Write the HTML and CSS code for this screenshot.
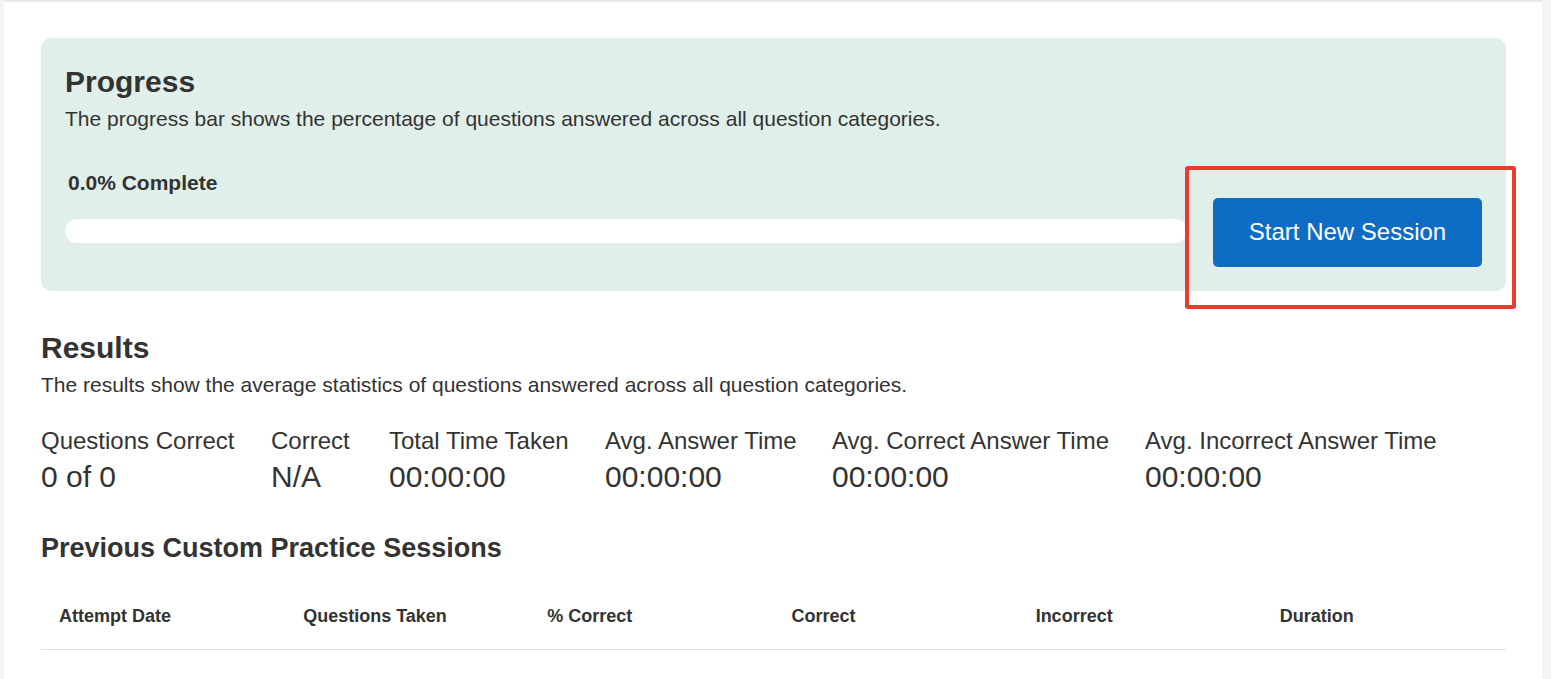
FILE: index.html
```html
<!DOCTYPE html>
<html lang="en">
<head>
<meta charset="utf-8">
<title>Progress</title>
<link rel="stylesheet" href="styles.css">
</head>
<body>
<main class="page">
  <section class="progress-card">
    <h2 class="card-title">Progress</h2>
    <p class="card-desc">The progress bar shows the percentage of questions answered across all question categories.</p>
    <div class="progress-row">
      <div class="progress-col">
        <div class="progress-label">0.0% Complete</div>
        <div class="progress-track"><div class="progress-fill" style="width:0%"></div></div>
      </div>
      <button class="btn-primary" type="button">Start New Session</button>
    </div>
    <div class="annotation-box"></div>
  </section>

  <section class="results">
    <h2 class="section-title">Results</h2>
    <p class="section-desc">The results show the average statistics of questions answered across all question categories.</p>
    <div class="stats">
      <div class="stat"><div class="stat-label">Questions Correct</div><div class="stat-value">0 of 0</div></div>
      <div class="stat"><div class="stat-label">Correct</div><div class="stat-value">N/A</div></div>
      <div class="stat"><div class="stat-label">Total Time Taken</div><div class="stat-value">00:00:00</div></div>
      <div class="stat"><div class="stat-label">Avg. Answer Time</div><div class="stat-value">00:00:00</div></div>
      <div class="stat"><div class="stat-label">Avg. Correct Answer Time</div><div class="stat-value">00:00:00</div></div>
      <div class="stat"><div class="stat-label">Avg. Incorrect Answer Time</div><div class="stat-value">00:00:00</div></div>
    </div>
  </section>

  <section class="sessions">
    <h3 class="sessions-title">Previous Custom Practice Sessions</h3>
    <table class="sessions-table">
      <thead>
        <tr>
          <th>Attempt Date</th>
          <th>Questions Taken</th>
          <th>% Correct</th>
          <th>Correct</th>
          <th>Incorrect</th>
          <th>Duration</th>
        </tr>
      </thead>
    </table>
  </section>
</main>
</body>
</html>
```

FILE: styles.css
```css
* { box-sizing: border-box; }

html, body {
  margin: 0;
  padding: 0;
  height: 100%;
}

body {
  background: #f4f4f4;
  font-family: "Liberation Sans", Arial, sans-serif;
  color: #333333;
  overflow: hidden;
}

.page {
  margin-left: 4px;
  width: 1538px;
  min-height: 100%;
  background: #ffffff;
  border-top: 2px solid #e9e9e9;
  padding: 36px 36px 0 37px;
}

/* Progress card */
.progress-card {
  position: relative;
  background: #e1efea;
  border-radius: 10px;
  padding: 26px 24px 24px 24px;
}

.card-title,
.section-title {
  margin: 0;
  font-size: 30px;
  line-height: 36px;
  font-weight: 700;
  color: #333333;
}

.card-desc,
.section-desc {
  margin: 4px 0 0;
  font-size: 21px;
  line-height: 29.4px;
  color: #333333;
}

.progress-row {
  display: flex;
  align-items: flex-end;
  gap: 26px;
  margin-top: 35px;
}

.progress-col {
  flex: 1;
  padding-bottom: 24px;
}

.progress-label {
  font-size: 21px;
  line-height: 29.4px;
  font-weight: 700;
  padding-left: 3px;
}

.progress-track {
  margin-top: 21px;
  height: 24px;
  border-radius: 12px;
  background: #ffffff;
  overflow: hidden;
}

.progress-fill {
  height: 100%;
  background: #0f6cc4;
}

.btn-primary {
  flex: none;
  width: 269px;
  height: 69px;
  border: none;
  border-radius: 5px;
  background: #0f6cc4;
  color: #ffffff;
  font-family: "Liberation Sans", Arial, sans-serif;
  font-size: 24px;
  padding: 0;
  cursor: pointer;
}

/* red annotation overlay */
.annotation-box {
  position: absolute;
  left: 1144px;
  top: 128px;
  width: 331px;
  height: 143px;
  border: 4px solid #ec3a2e;
  border-radius: 3px;
  pointer-events: none;
}

/* Results */
.results {
  margin-top: 39px;
}

.stats {
  display: grid;
  grid-template-columns: 230px 118px 216px 227px 313px auto;
  margin-top: 28px;
}

.stat-label {
  font-size: 24px;
  line-height: 28.8px;
  white-space: nowrap;
}

.stat-value {
  margin-top: 3px;
  font-size: 30px;
  line-height: 36px;
  white-space: nowrap;
}

/* Sessions */
.sessions {
  margin-top: 37px;
}

.sessions-title {
  margin: 0;
  font-size: 27px;
  line-height: 32.4px;
  font-weight: 700;
}

.sessions-table {
  margin-top: 20px;
  width: 100%;
  border-collapse: collapse;
  table-layout: fixed;
}

.sessions-table th {
  text-align: left;
  font-size: 18px;
  line-height: 25px;
  font-weight: 700;
  padding: 20px 18px;
  border-bottom: 1px solid #e2e2e2;
  color: #333333;
}
```
